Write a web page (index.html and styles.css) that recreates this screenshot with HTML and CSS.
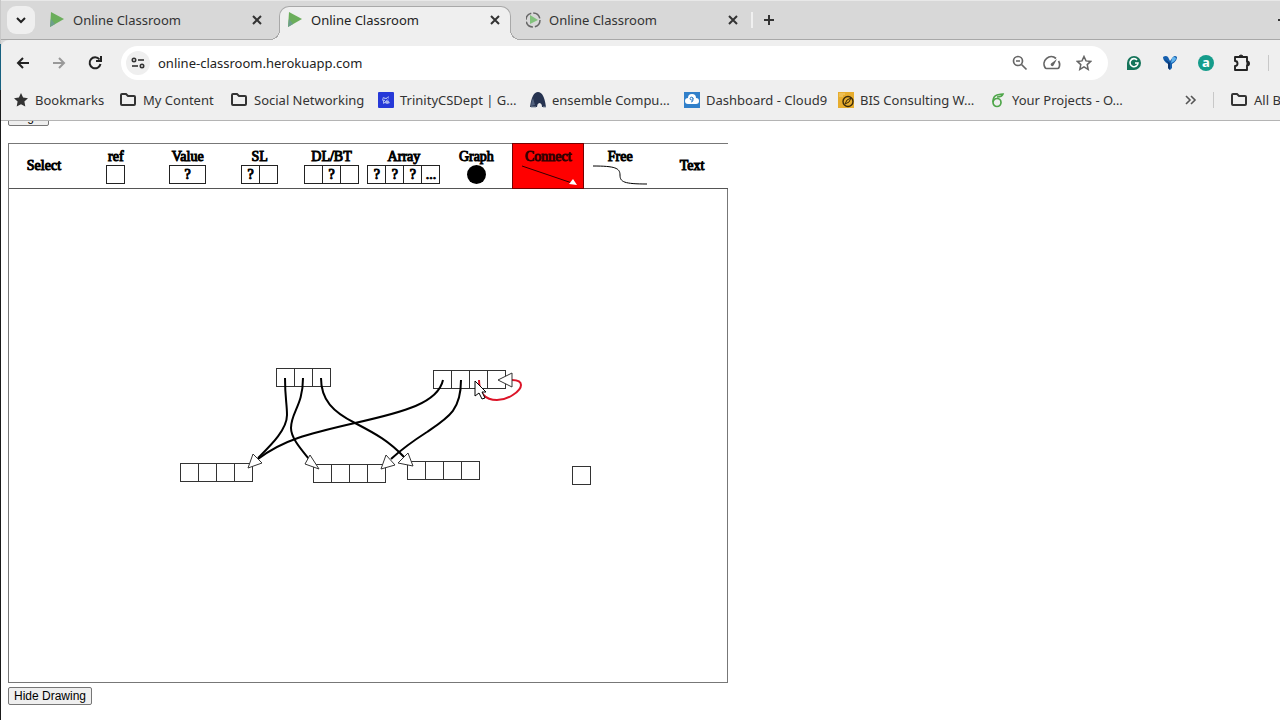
FILE: index.html
```html
<!DOCTYPE html>
<html lang="en">
<head>
<meta charset="UTF-8">
<meta name="viewport" content="width=device-width, initial-scale=1">
<title>Online Classroom</title>
<link rel="stylesheet" href="styles.css">
</head>
<body>

<header class="browser">
  <div class="tab-strip">
    <button class="tab-search" aria-label="Search tabs">
      <svg width="12" height="12" viewBox="0 0 12 12"><path d="M2 4l4 4 4-4" fill="none" stroke="#222" stroke-width="2"/></svg>
    </button>
    <div class="tab">
      <svg width="16" height="16" viewBox="0 0 16 16"><path d="M1 0L14 7 0 15z" fill="#6bae5b"/><path d="M0 15l1-8 4 5z" fill="#6d9d8c"/></svg>
      <span class="tab-title">Online Classroom</span>
      <button class="close" aria-label="Close tab"><svg width="10" height="10" viewBox="0 0 10 10"><path d="M1 1l8 8M9 1L1 9"/></svg></button>
    </div>
    <div class="tab active">
      <svg width="16" height="16" viewBox="0 0 16 16"><path d="M1 0L14 7 0 15z" fill="#6bae5b"/><path d="M0 15l1-8 4 5z" fill="#6d9d8c"/></svg>
      <span class="tab-title">Online Classroom</span>
      <button class="close" aria-label="Close tab"><svg width="10" height="10" viewBox="0 0 10 10"><path d="M1 1l8 8M9 1L1 9"/></svg></button>
    </div>
    <div class="tab">
      <svg width="16" height="16" viewBox="0 0 16 16"><circle cx="7" cy="8" r="7" fill="none" stroke="#666" stroke-width="1.5" stroke-dasharray="9 2"/><path d="M4 3l8 5-8 4z" fill="#82c27c"/></svg>
      <span class="tab-title">Online Classroom</span>
      <button class="close" aria-label="Close tab"><svg width="10" height="10" viewBox="0 0 10 10"><path d="M1 1l8 8M9 1L1 9"/></svg></button>
    </div>
    <span class="tab-divider"></span>
    <button class="new-tab" aria-label="New tab"><svg width="12" height="12" viewBox="0 0 12 12"><path d="M6 1v10M1 6h10" stroke="#333" stroke-width="2"/></svg></button>
    <button class="minimize" aria-label="Minimize"><svg width="10" height="10" viewBox="0 0 10 10"><path d="M0 5h10" stroke="#333" stroke-width="2"/></svg></button>
  </div>

  <div class="toolbar">
    <button class="tool" aria-label="Back"><svg width="16" height="16" viewBox="0 0 16 16"><path d="M14 8H3M8 3L3 8l5 5" fill="none" stroke="#222" stroke-width="2"/></svg></button>
    <button class="tool" aria-label="Forward"><svg width="16" height="16" viewBox="0 0 16 16"><path d="M2 8h11M8 3l5 5-5 5" fill="none" stroke="#999" stroke-width="2"/></svg></button>
    <button class="tool" aria-label="Reload"><svg width="16" height="16" viewBox="0 0 16 16"><path d="M12.5 4.5A5.5 5.5 0 1 0 13.5 9M14 1v5H9" fill="none" stroke="#222" stroke-width="2"/></svg></button>
    <div class="omnibox">
      <button class="site-info" aria-label="Site information">
        <svg width="14" height="14" viewBox="0 0 14 14"><g fill="none" stroke="#333" stroke-width="1.6"><circle cx="3" cy="4" r="1.7"/><path d="M7 4h6"/><circle cx="11" cy="10" r="1.7"/><path d="M1 10h6"/></g></svg>
      </button>
      <input class="address" type="text" value="online-classroom.herokuapp.com" aria-label="Address">
      <button class="box-icon" aria-label="Zoom"><svg width="16" height="16" viewBox="0 0 16 16"><g fill="none" stroke="#666" stroke-width="1.7"><circle cx="6" cy="6" r="4.5"/><path d="M9.5 9.5l5 5M4 6h4"/></g></svg></button>
      <button class="box-icon" aria-label="Performance"><svg width="18" height="16" viewBox="0 0 18 16"><path d="M13 3.5A7.2 7.2 0 0 0 2 12.5Q2.5 13.5 3.5 13.5H14.5Q15.5 13.5 16 12.5A7 7 0 0 0 15.5 6" fill="none" stroke="#666" stroke-width="1.7"/><path d="M14 4L10.5 10.5A1.5 1.5 0 0 1 8 8.5z" fill="#666"/></svg></button>
      <button class="box-icon" aria-label="Bookmark this tab"><svg width="16" height="16" viewBox="0 0 16 16"><path d="M8 1.5l2 4.4 4.7.5-3.5 3.2 1 4.8L8 11.9l-4.2 2.5 1-4.8L1.3 6.400 6 5.900z" fill="none" stroke="#666" stroke-width="1.5"/></svg></button>
    </div>
    <button class="tool" aria-label="Grammar"><svg width="16" height="16" viewBox="0 0 16 16"><path d="M1 15V8a7 7 0 1 1 7 7z" fill="#15745a"/><path d="M11 5A4 4 0 1 0 12 8H9" fill="none" stroke="#fff" stroke-width="1.6"/></svg></button>
    <button class="tool" aria-label="Extension"><svg width="16" height="16" viewBox="0 0 16 16"><path d="M1 2Q4 0 6 2l2 4 3-4q2-2 4 0 0 4-5 7v4l-2 2-2-2V9Q1 6 1 2z" fill="#155fae"/><path d="M2 4l4 4v5l2 2V8z" fill="#0b3670"/><path d="M10 3q2-2 4 0 0 3-5 5z" fill="#62b4ed"/></svg></button>
    <button class="tool" aria-label="Assistant"><span class="badge-a">a</span></button>
    <button class="tool" aria-label="Extensions"><svg width="18" height="18" viewBox="0 0 18 18"><path d="M2 3h12v4.500a2 2 0 0 1 0 4V16H2v-4a2.300 2.300 0 0 0 0-5z" fill="none" stroke="#222" stroke-width="1.900" stroke-linejoin="round"/><path d="M6 3a2 2 0 0 1 4 0zM14 7.500a2 2 0 0 1 0 4z" fill="#222" stroke="#222"/></svg></button>
    <span class="divider"></span>
  </div>

  <nav class="bookmarks">
    <a href="#"><svg width="16" height="16" viewBox="0 0 16 16"><path d="M8 1l2.1 4.6 4.900.6-3.6 3.4.900 5L8 12.200l-4.300 2.400.900-5L1 6.200l4.900-.600z" fill="#333"/></svg>Bookmarks</a>
    <a href="#"><svg width="18" height="16" viewBox="0 0 18 16"><path d="M2 3q0-1 1-1h4l2 2h6q1 0 1 1v7q0 1-1 1H3q-1 0-1-1z" class="folder"/></svg>My Content</a>
    <a href="#"><svg width="18" height="16" viewBox="0 0 18 16"><path d="M2 3q0-1 1-1h4l2 2h6q1 0 1 1v7q0 1-1 1H3q-1 0-1-1z" class="folder"/></svg>Social Networking</a>
    <a href="#"><svg width="16" height="16" viewBox="0 0 16 16"><rect width="16" height="16" rx="1" fill="#2639d8"/><path d="M5 5l3 1 3-2-1 4 2 3-3 1-2-1-2 1V9L4 8z" fill="#a8b5ef"/><path d="M5 7l5 1M6 10l4-4" stroke="#2639d8"/></svg>TrinityCSDept | G…</a>
    <a href="#"><svg width="16" height="16" viewBox="0 0 16 16"><path d="M0 15Q2 0 8 0t8 15h-4q0-4-3-4-2 1-2 4z" fill="#263350"/><path d="M3 6q-2 4-2 8l4-1z" fill="#52617d"/><path d="M1 15h5M13 15h3" stroke="#8794a5"/></svg>ensemble Compu…</a>
    <a href="#"><svg width="16" height="16" viewBox="0 0 16 16"><rect width="16" height="16" fill="#3180ca"/><path d="M4 12a3 3 0 0 1 0-6 4 4 0 0 1 8 0 3 3 0 0 1 0 6z" fill="#fff"/><path d="M9 7a1.5 1.5 0 1 0-2 1h2q0 2-2 2M9 8V6" fill="none" stroke="#3180ca"/></svg>Dashboard - Cloud9</a>
    <a href="#"><svg width="16" height="16" viewBox="0 0 16 16"><rect width="16" height="16" fill="#e7ad2e"/><path d="M1 2h6M1 4h4" stroke="#f4d27d"/><circle cx="10" cy="9.5" r="5" fill="none" stroke="#3a2b0b" stroke-width="1.4"/><path d="M7 12l2-4 4-2-2 4z" fill="none" stroke="#3a2b0b"/></svg>BIS Consulting W…</a>
    <a href="#"><svg width="16" height="16" viewBox="0 0 16 16"><g fill="none" stroke="#4fa64a" stroke-width="1.7"><circle cx="7" cy="10.500" r="4"/><path d="M3 10Q3 4 7 3t6-1q-1 3-6 3"/></g></svg>Your Projects - O…</a>
    <button class="more" aria-label="More bookmarks"><svg width="12" height="12" viewBox="0 0 12 12"><path d="M1 2l4 4-4 4M6 2l4 4-4 4" fill="none" stroke="#555" stroke-width="1.6"/></svg></button>
    <span class="divider"></span>
    <a href="#"><svg width="18" height="16" viewBox="0 0 18 16"><path d="M2 3q0-1 1-1h4l2 2h6q1 0 1 1v7q0 1-1 1H3q-1 0-1-1z" class="folder"/></svg>All Bookmarks</a>
  </nav>
</header>

<main class="page">
  <button class="page-btn login">Login</button>

  <div class="sketch">
    <div class="palette">
      <button class="item">Select</button>
      <button class="item">ref<span class="cells"><i></i></span></button>
      <button class="item">Value<span class="cells wide"><i>?</i></span></button>
      <button class="item">SL<span class="cells"><i>?</i><i></i></span></button>
      <button class="item">DL/BT<span class="cells"><i></i><i>?</i><i></i></span></button>
      <button class="item">Array<span class="cells"><i>?</i><i>?</i><i>?</i><i>...</i></span></button>
      <button class="item">Graph<span class="node"></span></button>
      <button class="item selected">Connect
        <svg width="60" height="22" viewBox="0 0 60 22"><path d="M4 1l50 17" stroke="#300"/><path d="M55 14l4 6-8-1z" fill="#fff"/></svg>
      </button>
      <button class="item">Free
        <svg width="60" height="22" viewBox="0 0 60 22"><path d="M3 1c22 0 27 2 27 9s4 9 27 9" fill="none" stroke="#000"/></svg>
      </button>
      <button class="item">Text</button>
    </div>

    <svg class="canvas" viewBox="9 189 718 493" role="img" aria-label="Drawing">
      <g class="boxes">
        <path d="M276 368h54v18h-54zM294 368v18M312 368v18"/>
        <path d="M433 370h72v18h-72zM451 370v18M469 370v18M487 370v18"/>
        <path d="M180 463h72v18h-72zM198 463v18M216 463v18M234 463v18"/>
        <path d="M313 464h72v18h-72zM331 464v18M349 464v18M367 464v18"/>
        <path d="M407 461h72v18h-72zM425 461v18M443 461v18M461 461v18"/>
        <path d="M572 466h18v18h-18z"/>
      </g>
      <!-- pointers -->
      <g class="links">
        <path d="M285 378C285 398 287 404 287 415C287 430 270 446 258 458"/>
        <path d="M303 378C303 406 291 412 291 428C291 438 301 449 309 459"/>
        <path d="M321 378C321 400 333 412 355 423C376 434 389 441 404 457"/>
        <path d="M443 380C438 403 404 412 355 423C307 434 283 440 258 459"/>
        <path d="M461 380C461 410 449 417 427 432C413 441 403 448 391 459"/>
        <path class="current" d="M479 380C479 394 485 400 497 400C508 400 521 391 521 385C521 381 517 380 512 380"/>
      </g>
      <g class="heads">
        <path d="M248 468l5-14 9 9z"/>
        <path d="M310 455l-5 9 14 5z"/>
        <path d="M381 469l5-14 9 10z"/>
        <path d="M408 453l-10 10 15 3z"/>
        <path d="M498 380l14-7v14z"/>
      </g>
      <path class="pointer" d="M475 381v15l4-3 3 6 3-1-3-6h4z"/>
    </svg>
  </div>

  <button class="page-btn">Hide Drawing</button>
</main>

</body>
</html>
```
FILE: styles.css
```css
* {
  box-sizing: border-box;
}
body {
  margin: 0;
  padding-left: 1px;
  height: 100vh;
  overflow: hidden;
  display: flex;
  flex-direction: column;
  font-family: "Noto Sans", sans-serif;
  background: linear-gradient(#c8c8c8 0 44px, #17607f 44px 90px, #1a1a1a 90px);
}
button {
  font: inherit;
  margin: 0;
  padding: 0;
  border: 0;
  background: none;
  color: inherit;
}
svg {
  display: block;
  flex: none;
}

/* Tabs */
.browser {
  flex: none;
  overflow: hidden;
  font-size: 13px;
  color: #333;
  background: #d8d8d8;
}
.tab-strip {
  display: flex;
  align-items: flex-end;
  height: 40px;
  padding-left: 6px;
  background: #d8d8d8;
  box-shadow: inset 0 -1px #a8a8a8, inset 0 1px #e8e8e8;
}
.tab-search {
  display: grid;
  place-items: center;
  width: 28px;
  height: 28px;
  margin: 0 6px 6px 0;
  border-radius: 9px;
  background: #efefef;
}
.tab {
  position: relative;
  display: flex;
  align-items: center;
  width: 232px;
  height: 34px;
  margin-right: 6px;
  padding: 0 11px 6px 9px;
}
.tab.active {
  background: #efefef;
  border: 1px solid #a8a8a8;
  border-bottom: 0;
  border-radius: 10px 10px 0 0;
  padding: 0 10px 7px 8px;
  color: #222;
}
.tab.active::before,
.tab.active::after {
  content: "";
  position: absolute;
  bottom: 0;
  width: 10px;
  height: 10px;
}
.tab.active::before {
  left: -10px;
  background: radial-gradient(circle at 0 0, #d8d8d8 9px, #a8a8a8 9px 10px, #efefef 10px);
}
.tab.active::after {
  right: -10px;
  background: radial-gradient(circle at 100% 0, #d8d8d8 9px, #a8a8a8 9px 10px, #efefef 10px);
}
.tab-title {
  flex: 1;
  margin-left: 7px;
  white-space: nowrap;
}
.close svg {
  stroke: #333;
  stroke-width: 2;
}
.tab-divider {
  width: 2px;
  height: 16px;
  margin: 0 10px 12px -4px;
  background: #f0f0f0;
}
.new-tab {
  margin-bottom: 14px;
}
.minimize {
  margin: 0 -8px 15px auto;
}

/* Toolbar */
.toolbar {
  display: flex;
  align-items: center;
  height: 46px;
  padding: 0 11px 0 4px;
  background: #efefef;
  border-radius: 8px 0 0 0;
}
.tool {
  display: grid;
  place-items: center;
  width: 36px;
  height: 34px;
}
.omnibox {
  flex: 1;
  display: flex;
  align-items: center;
  height: 34px;
  margin: 0 8px;
  padding: 0 8px 0 5px;
  border-radius: 17px;
  background: #fff;
}
.site-info {
  display: grid;
  place-items: center;
  width: 24px;
  height: 24px;
  border-radius: 50%;
  background: #efefef;
}
.address {
  flex: 1;
  min-width: 0;
  margin-left: 8px;
  padding: 0;
  border: 0;
  outline: 0;
  background: none;
  font: 13px "Noto Sans", sans-serif;
  color: #222;
}
.box-icon {
  display: grid;
  place-items: center;
  width: 32px;
  height: 32px;
}
.badge-a {
  width: 16px;
  height: 16px;
  border-radius: 50%;
  background: #159c8b;
  color: #fff;
  font-weight: bold;
  line-height: 14px;
}
.divider {
  width: 1px;
  height: 16px;
  margin-left: 8px;
  background: #c8c8c8;
}

/* Bookmarks */
.bookmarks {
  display: grid;
  grid-template-columns: 106px 111px 148px 152px 154px 154px 152px 1fr 12px 33px 50px;
  align-items: center;
  height: 35px;
  padding: 0 0 6px 12px;
  background: #efefef;
  border-bottom: 1px solid #b4b4b4;
}
.bookmarks a {
  display: flex;
  align-items: center;
  gap: 6px;
  color: #333;
  text-decoration: none;
  white-space: nowrap;
}
.bookmarks .divider {
  margin-left: 16px;
}
.folder {
  fill: none;
  stroke: #333;
  stroke-width: 2;
}

/* Page */
.page {
  flex: 1;
  min-height: 0;
  overflow: hidden;
  padding-left: 7px;
  background: #fff;
}
.page-btn {
  display: block;
  height: 18px;
  padding: 0 5px;
  border: 1px solid #767676;
  border-radius: 2px;
  background: #efefef;
  color: #000;
  font: 12px "Liberation Sans", sans-serif;
}
.login {
  margin: -13px 0 17px;
}
.sketch {
  width: 720px;
  max-width: 100%;
  margin-bottom: 4px;
}
.palette {
  display: grid;
  grid-template-columns: repeat(10, 1fr);
  height: 46px;
  box-shadow: inset 1px 1px #777, inset 0 -1px #555;
}
.item {
  display: flex;
  flex-direction: column;
  align-items: center;
  justify-content: center;
  font: 14px/16px "Liberation Serif", serif;
  color: #000;
  -webkit-text-stroke: 1px;
}
.item.selected {
  background: #f00;
  border: 1px solid #700;
  color: #300;
}
.item svg {
  height: 22px;
  margin-bottom: -3px;
}
.cells {
  display: flex;
}
.cells i {
  width: 19px;
  height: 19px;
  border: 1px solid #222;
  font-style: normal;
  line-height: 17px;
}
.cells i + i {
  margin-left: -1px;
}
.cells.wide i {
  width: 37px;
}
.node {
  width: 19px;
  height: 19px;
  border-radius: 50%;
  background: #000;
}
.canvas {
  width: 100%;
  border: 1px solid #777;
  border-top: 0;
}
.boxes {
  fill: none;
  stroke: #333;
  shape-rendering: crispEdges;
}
.links {
  fill: none;
  stroke: #000;
  stroke-width: 2;
}
.links .current {
  stroke: #dc1428;
}
.heads {
  fill: #fff;
  stroke: #333;
}
.pointer {
  fill: #fff;
  stroke: #000;
}
```
